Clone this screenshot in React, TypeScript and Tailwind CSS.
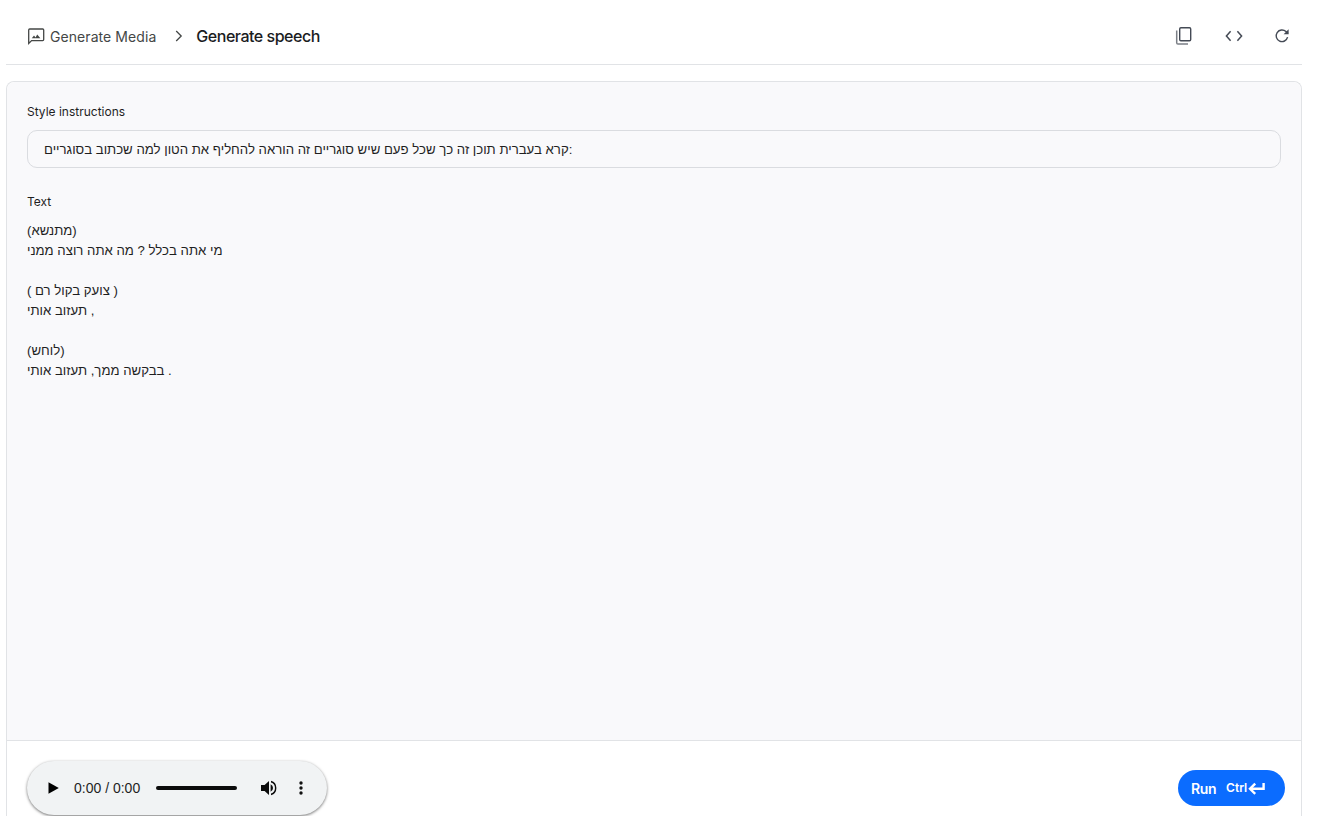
const font = { fontFamily: 'Inter, "Liberation Sans", sans-serif' };
const hebrew = { fontFamily: '"Liberation Sans", sans-serif' };

function MediaIcon() {
  return (
    <svg width="18" height="18" viewBox="0 0 18 18" className="text-[#444746]" fill="none">
      <path d="M1.7 16.4V3c0-.6.4-1 1-1h13c.6 0 1 .4 1 1v9.6c0 .6-.4 1-1 1H4.6z" stroke="currentColor" strokeWidth="1.3" />
      <path d="M4.8 11.3l2.2-2.9 1.6 2 1.6-3 3.2 3.9z" fill="currentColor" />
    </svg>
  );
}

function CopyIcon() {
  return (
    <svg width="18" height="20" viewBox="0 0 18 20" fill="none">
      <rect x="4.7" y="1.7" width="11" height="13" rx="1.2" stroke="#444a55" strokeWidth="1.4" />
      <path d="M1.7 4.5v12.3c0 .8.5 1.3 1.3 1.3h10" stroke="#7b7f86" strokeWidth="1.5" />
    </svg>
  );
}

function CodeIcon() {
  return (
    <svg width="18" height="12" viewBox="0 0 18 12" fill="none" stroke="#444a55" strokeWidth="1.5">
      <path d="M5.6 1.2L1.4 6l4.2 4.8" />
      <path d="M12.4 1.2L16.6 6l-4.2 4.8" />
    </svg>
  );
}

function RefreshIcon() {
  return (
    <svg width="16" height="16" viewBox="0 0 16 16" fill="none" className="-ml-[1px] mr-[1px]">
      <path d="M13.6 9.2A5.8 5.8 0 1 1 12 3.6L14 5.6" stroke="#444a55" strokeWidth="1.4" />
      <path d="M14.6 1.2v5H9.6z" fill="#444a55" />
    </svg>
  );
}

function AudioPlayer() {
  return (
    <div className="flex h-[54px] w-[300px] items-center rounded-full bg-[#f1f3f4] pl-[21px] shadow-[0_1px_3px_rgba(0,0,0,0.55)]">
      <svg width="11" height="12" viewBox="0 0 11 12" className="shrink-0">
        <path d="M0.5 0.3L10.8 6 0.5 11.7z" fill="#000" />
      </svg>
      <span className="ml-[15px] whitespace-nowrap text-[14px] text-[#1f1f1f]" style={hebrew}>
        0:00 / 0:00
      </span>
      <div className="ml-[16px] h-1 w-[81px] rounded-full bg-[#0b0b0b]" />
      <svg width="18" height="18" viewBox="0 0 18 18" className="ml-[23px] shrink-0">
        <path d="M1 6v6h3.6L9 16V2L4.6 6z" fill="#0b0b0b" />
        <path d="M10.6 5.2v7.6a4.2 4.2 0 0 0 0-7.6z" fill="#0b0b0b" />
        <path d="M11 1.8v1.7a5.8 5.8 0 0 1 0 11v1.7a7.5 7.5 0 0 0 0-14.4z" fill="#0b0b0b" />
      </svg>
      <svg width="4" height="14" viewBox="0 0 4 14" className="ml-[21px] shrink-0">
        <circle cx="2" cy="2" r="1.7" fill="#111" />
        <circle cx="2" cy="7" r="1.7" fill="#111" />
        <circle cx="2" cy="12" r="1.7" fill="#111" />
      </svg>
    </div>
  );
}

export default function App() {
  return (
    <div className="flex h-[816px] w-[1317px] flex-col overflow-hidden bg-white pl-[6px] pr-[15px]" style={font}>
      <header className="flex h-[65px] shrink-0 items-center border-b border-[#e1e3e6] pl-[21px] pr-[11px] pt-2">
        <MediaIcon />
        <span className="ml-[5px] text-[14px] tracking-[0.07px] text-[#444746]">Generate Media</span>
        <svg width="8" height="12" viewBox="0 0 8 12" fill="none" stroke="#444746" strokeWidth="1.3" className="ml-[19px]">
          <path d="M1.2 1l5 5-5 5" />
        </svg>
        <span className="ml-[13px] text-[16px] font-medium tracking-[-0.48px] text-[#1a1c1e]">Generate speech</span>
        <div className="ml-auto flex items-center gap-[32px]">
          <CopyIcon />
          <CodeIcon />
          <RefreshIcon />
        </div>
      </header>

      <main className="mt-4 flex min-h-0 flex-1 flex-col rounded-t-lg border-x border-t border-[#e1e3e6]">
        <div className="min-h-0 flex-1 rounded-t-lg bg-[#f9f9fb] px-5 pt-[22px]">
          <div className="text-[12px] leading-4 text-[#1f1f1f]">Style instructions</div>
          <div className="mt-[10px] flex h-[38px] items-center rounded-[10px] border border-[#dadce0] px-4 pt-[1px] text-[13.2px] text-[#1f1f1f]" style={hebrew}>
            קרא בעברית תוכן זה כך שכל פעם שיש סוגריים זה הוראה להחליף את הטון למה שכתוב בסוגריים:
          </div>
          <div className="mt-[26px] text-[12px] leading-4 text-[#1f1f1f]">Text</div>
          <div className="mt-[11px] text-[13.2px] leading-5 text-[#1f1f1f]" style={hebrew}>
            <div>(מתנשא)</div>
            <div>מי אתה בכלל ? מה אתה רוצה ממני</div>
            <div className="h-5" />
            <div>( צועק בקול רם )</div>
            <div>תעזוב אותי ,</div>
            <div className="h-5" />
            <div>(לוחש)</div>
            <div>בבקשה ממך, תעזוב אותי .</div>
          </div>
        </div>
        <footer className="flex h-[76px] shrink-0 items-center justify-between border-t border-[#e1e3e6] pl-5 pr-4 pt-[19px]">
          <AudioPlayer />
          <button className="flex h-9 w-[107px] items-center rounded-full bg-[#0b6cff] pl-[13px] text-white">
            <span className="text-[14px] font-semibold tracking-[-0.4px]">Run</span>
            <span className="ml-[10px] text-[12px] font-semibold">Ctrl</span>
            <svg width="17" height="13" viewBox="0 0 17 13" fill="none" stroke="#fff" strokeWidth="2.4" className="ml-[1px]">
              <path d="M15.6 1v5.8H3" />
              <path d="M7.2 1.6L2 6.8l5.2 5" />
            </svg>
          </button>
        </footer>
      </main>
    </div>
  );
}
